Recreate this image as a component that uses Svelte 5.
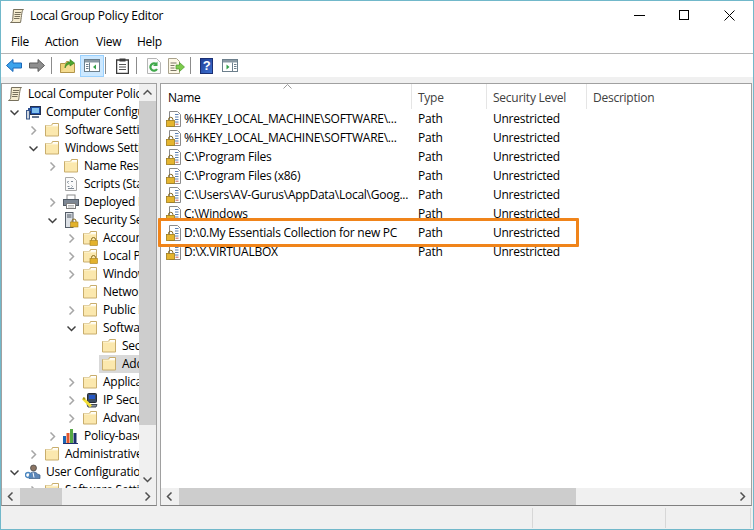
<script>
  const tree = [
    { l: 0, t: 'Local Computer Policy', i: 'scroll' },
    { l: 1, t: 'Computer Configuration', i: 'pc', c: 'o' },
    { l: 2, t: 'Software Settings', i: 'folder', c: 'c' },
    { l: 2, t: 'Windows Settings', i: 'folder', c: 'o' },
    { l: 3, t: 'Name Resolution Policy', i: 'folder', c: 'c' },
    { l: 3, t: 'Scripts (Startup/Shutdown)', i: 'script' },
    { l: 3, t: 'Deployed Printers', i: 'printer', c: 'c' },
    { l: 3, t: 'Security Settings', i: 'server', c: 'o' },
    { l: 4, t: 'Account Policies', i: 'lockfolder', c: 'c' },
    { l: 4, t: 'Local Policies', i: 'lockfolder', c: 'c' },
    { l: 4, t: 'Windows Firewall', i: 'folder', c: 'c' },
    { l: 4, t: 'Network List Manager', i: 'folder' },
    { l: 4, t: 'Public Key Policies', i: 'folder', c: 'c' },
    { l: 4, t: 'Software Restriction', i: 'folder', c: 'o' },
    { l: 5, t: 'Security Levels', i: 'folder' },
    { l: 5, t: 'Additional Rules', i: 'folder', sel: true },
    { l: 4, t: 'Application Control', i: 'folder', c: 'c' },
    { l: 4, t: 'IP Security Policies', i: 'ipsec', c: 'c' },
    { l: 4, t: 'Advanced Audit', i: 'folder', c: 'c' },
    { l: 3, t: 'Policy-based QoS', i: 'bars', c: 'c' },
    { l: 2, t: 'Administrative Templates', i: 'folder', c: 'c' },
    { l: 1, t: 'User Configuration', i: 'user', c: 'o' },
    { l: 2, t: 'Software Settings', i: 'folder', c: 'c' }
  ];
  const rows = [
    { n: '%HKEY_LOCAL_MACHINE\\SOFTWARE\\...' },
    { n: '%HKEY_LOCAL_MACHINE\\SOFTWARE\\...' },
    { n: 'C:\\Program Files' },
    { n: 'C:\\Program Files (x86)' },
    { n: 'C:\\Users\\AV-Gurus\\AppData\\Local\\Goog...' },
    { n: 'C:\\Windows' },
    { n: 'D:\\0.My Essentials Collection for new PC', hi: true },
    { n: 'D:\\X.VIRTUALBOX' }
  ];
</script>

{#snippet lock(x, y)}
  <path d="M{x + 1.5} {y + 3}v-1a2 2 0 0 1 4 0v1" fill="none" stroke="#8a6d1e" stroke-width="1" />
  <rect x={x} y={y + 3} width="7.5" height="5" fill="#e3b22c" stroke="#a57f1a" stroke-width=".6" />
{/snippet}

{#snippet folderShape()}
  <path d="M1.500 3.500h6l1-2h6v12.500h-13z" fill="#fbe8ae" stroke="#c8ad6c" />
  <path d="M9 2h5v2H8.500z" fill="#fff" />
  <path d="M2 4h12" stroke="#fff7dc" />
{/snippet}

{#snippet icon(name)}
  <svg class="ico" viewBox="0 0 16 16" width="16" height="16" aria-hidden="true">
    {#if name === 'folder'}
      {@render folderShape()}
    {:else if name === 'lockfolder'}
      {@render folderShape()}
      {@render lock(8, 7.5)}
    {:else if name === 'scroll'}
      <path d="M4.500 1.500h10c-1.500 1-1.500 3-2 6s-.5 5-1 7H1.500c1.500-1 2-1 2.200-3z" fill="#f5ecd0" stroke="#77705c" />
      <path d="M6 4.500h6M5.500 6.500h6M5.500 8.500h5.500M5 10.500h5.500" stroke="#77705c" />
    {:else if name === 'pc'}
      <rect x="5.500" y="2.500" width="10" height="8" fill="#1d4fa8" stroke="#23314f" />
      <rect x="7" y="4" width="7" height="5" fill="#7fc0ee" />
      <rect x="1.500" y="6.500" width="3" height="8.500" fill="#cfd6df" stroke="#3d5a8a" />
      <path d="M7 13h7" stroke="#66758f" stroke-width="2" />
      <rect x="3" y="4" width="3" height="3" fill="#2c4f92" />
    {:else if name === 'script'}
      <path d="M2.500 1.500h8l3 3v10h-11z" fill="#fafafa" stroke="#a8a8a8" />
      <path d="M4.500 5.500h1l-1 1 1 1M8 5.500h2M4.500 10.500h2M8.500 9.500l1 1-1 1M5 12.500h6" stroke="#7f8a96" fill="none" />
    {:else if name === 'printer'}
      <rect x="4" y="1" width="8" height="5" fill="#fff" stroke="#8b8b8b" />
      <rect x=".5" y="5.500" width="15" height="6" fill="#7d8794" stroke="#525b66" />
      <rect x="3.500" y="9.500" width="9" height="5" fill="#fff" stroke="#7d7d7d" />
      <path d="M5 11.500h6M5 13h6" stroke="#b7b7b7" />
    {:else if name === 'server'}
      <rect x="2.500" y=".5" width="7.500" height="15" fill="#dde1e6" stroke="#555d68" />
      <path d="M4 3h4.500M4 5h4.500" stroke="#4b5561" />
      {@render lock(7.500, 7)}
    {:else if name === 'ipsec'}
      <rect x="5.500" y="1.500" width="9" height="9" rx="1" fill="#3c4a5e" stroke="#242b36" />
      <rect x="7" y="3" width="6" height="4" fill="#2457c5" />
      <path d="M5 12.500h10l-1 2.500H6z" fill="#8d96a3" stroke="#424a55" />
      <path d="M1 6.500l8 8" stroke="#f3df38" stroke-width="3" />
      <path d="M1.500 5l-1 2 2 1 1-2z" fill="#a8941a" />
    {:else if name === 'bars'}
      <rect x="0" y="8" width="3" height="7" fill="#1a67b5" />
      <rect x="3.500" y="5" width="3" height="10" fill="#e2572d" />
      <rect x="7" y="1" width="3" height="14" fill="#55a944" />
      <rect x="10.500" y="5" width="3" height="10" fill="#1e2f6d" />
      <path d="M0 15.500h15" stroke="#1e2f6d" />
    {:else if name === 'user'}
      <circle cx="8.500" cy="4" r="3" fill="#8c7564" stroke="#3f3f3f" stroke-width=".7" />
      <path d="M4 14.500c0-5 2-6.500 4.500-6.500s3.500 1.500 4 2l2.500 1v3.500z" fill="#5d87b8" stroke="#3a5a83" stroke-width=".7" />
      <circle cx="3" cy="11" r="2.500" fill="none" stroke="#4b87c0" stroke-width="1.400" />
      <path d="M8 8.500l1 5" stroke="#fff" />
    {/if}
  </svg>
{/snippet}

{#snippet doclock()}
  <svg class="ico" viewBox="0 0 16 16" width="16" height="16" aria-hidden="true">
    <path d="M3.500 .5h8l3 3v12h-11z" fill="#fff" stroke="#8a8a8a" />
    <path d="M9 3.500h3.500M9 6h3.500M9 8.500h3.500M9 11h3.500" stroke="#5a7fb0" />
    <path d="M9.500 13.200h3" stroke="#c65b52" />
    <path d="M2.500 9.500v-1a2.200 2.200 0 0 1 4.400 0v1" fill="none" stroke="#80651d" />
    <rect x=".5" y="9.500" width="8" height="6" fill="#e5b52f" stroke="#9c7a1c" stroke-width=".8" />
  </svg>
{/snippet}

{#snippet chev(dir, w = '#6c6c6c')}
  <svg class="chev" viewBox="0 0 9 9" width="9" height="9" aria-hidden="true">
    {#if dir === 'r'}<path d="M2.500 .5l4 4-4 4" fill="none" stroke={w} stroke-width="1.500" />
    {:else if dir === 'l'}<path d="M6.500 .5l-4 4 4 4" fill="none" stroke={w} stroke-width="1.500" />
    {:else if dir === 'u'}<path d="M.5 6.500l4-4 4 4" fill="none" stroke={w} stroke-width="1.500" />
    {:else}<path d="M.5 2.500l4 4 4-4" fill="none" stroke={w} stroke-width="1.500" />{/if}
  </svg>
{/snippet}

<div class="window">
  <header class="title">
    <svg class="appicon" viewBox="0 0 16 16" width="16" height="16" aria-hidden="true">
      <path d="M4.500 1.500h10c-1.500 1-1.500 3-2 6s-.5 5-1 7H1.500c1.500-1 2-1 2.200-3z" fill="#f5ecd0" stroke="#77705c" />
      <path d="M6 4.500h6M5.500 6.500h6M5.500 8.500h5.500M5 10.500h5.500" stroke="#77705c" />
    </svg>
    <span class="title-text">Local Group Policy Editor</span>
    <div class="win-btns">
      <svg viewBox="0 0 11 11" width="11" height="11" aria-hidden="true"><path d="M0 5.500h11" stroke="#000" /></svg>
      <svg viewBox="0 0 11 11" width="11" height="11" aria-hidden="true"><rect x=".5" y=".5" width="9" height="9" fill="none" stroke="#000" /></svg>
      <svg viewBox="0 0 11 11" width="11" height="11" aria-hidden="true"><path d="M.5.5l10 10M10.500.5l-10 10" stroke="#000" /></svg>
    </div>
  </header>

  <nav class="menu"><span>File</span><span>Action</span><span>View</span><span>Help</span></nav>

  <div class="toolbar">
    <svg class="tb w16" viewBox="0 0 16 13" width="16" height="13" aria-hidden="true"><path d="M.5 6.500l6.500-6v3.500h8.500v5H7v3.500z" fill="#3ba3ec" stroke="#1b67b8" /></svg>
    <svg class="tb w16 fw" viewBox="0 0 16 13" width="16" height="13" aria-hidden="true"><path d="M15.500 6.500l-6.500-6v3.500H.5v5H9v3.500z" fill="#8f8f8f" stroke="#5c5c5c" /></svg>
    <i class="sep s1"></i>
    <svg class="tb up" viewBox="0 0 16 16" width="16" height="16" aria-hidden="true"><path d="M.5 5.500h5l1-2h2v11h-8z" fill="#f0d27a" stroke="#b2954a" /><path d="M.5 14.500h14v-9h-6" fill="#f5dc90" stroke="#b2954a" /><path d="M5 10c0-4 2-6 5-6V1.500L14.500 5 10 8V6c-2 0-3.500 1-5 4z" fill="#4ea72e" stroke="#2f7d1c" stroke-width=".6" /></svg>
    <div class="tb-active">
      <svg viewBox="0 0 16 13" width="16" height="13" aria-hidden="true"><rect x=".5" y=".5" width="15" height="12" fill="#fff" stroke="#6c7f8c" /><rect x="1" y="1" width="14" height="2.500" fill="#8a99a3" /><path d="M5.500 3.500v9" stroke="#6c7f8c" /><path d="M2 5.500h2.500M2 7.500h2.500M2 9.500h2.500" stroke="#6c7f8c" /><path d="M12 5.500l-3 2.500 3 2.500z" fill="#35a04a" /></svg>
    </div>
    <i class="sep s2"></i>
    <svg class="tb clip" viewBox="0 0 13 16" width="13" height="16" aria-hidden="true"><rect x=".5" y="2" width="12" height="13.500" fill="#fff" stroke="#3a3a3a" stroke-width="1.500" /><rect x="3.500" y=".5" width="6" height="3" fill="#3a3a3a" /><path d="M3 6.500h7M3 9h7M3 11.500h7" stroke="#555" /></svg>
    <i class="sep s3"></i>
    <svg class="tb refresh" viewBox="0 0 14 16" width="14" height="16" aria-hidden="true"><path d="M.5.5h9l4 4v11H.5z" fill="#fbfbfb" stroke="#b5b5b5" /><path d="M10 11a3.600 3.600 0 1 1-.5-4.500" fill="none" stroke="#3fa84a" stroke-width="2.200" /><path d="M10.500 3.500v4.500H6z" fill="#3fa84a" /></svg>
    <svg class="tb export" viewBox="0 0 17 16" width="17" height="16" aria-hidden="true"><path d="M.5.5h8l3 3v12H.5z" fill="#fdf8e6" stroke="#a9a28c" /><path d="M2.500 5h6M2.500 7.500h4M2.500 10h4M2.500 12.500h6" stroke="#7c7766" /><path d="M8 7h3.500V4.500L16.500 9l-5 4.500V11H8z" fill="#7ccb4c" stroke="#4c9a2c" stroke-width=".7" /></svg>
    <i class="sep s4"></i>
    <div class="help">?</div>
    <svg class="tb view" viewBox="0 0 16 13" width="16" height="13" aria-hidden="true"><rect x=".5" y=".5" width="15" height="12" fill="#fff" stroke="#6c7f8c" /><rect x="1" y="1" width="14" height="2.500" fill="#8a99a3" /><path d="M10.500 3.500v9" stroke="#6c7f8c" /><path d="M12 5.500h2.500M12 7.500h2.500M12 9.500h2.500" stroke="#6c7f8c" /><path d="M4.500 5.500l3 2.500-3 2.500z" fill="#35a04a" /></svg>
  </div>

  <main class="panes">
    <section class="pane left">
      <div class="tree">
        {#each tree as n}
          <div class="node l{n.l}">
            <span class="tw">{#if n.c === 'c'}{@render chev('r', '#a6a6a6')}{:else if n.c === 'o'}{@render chev('d', '#404040')}{/if}</span>
            <span class="item" class:sel={n.sel}>
              {@render icon(n.i)}
              <span class="label">{n.t}</span>
            </span>
          </div>
        {/each}
      </div>
      <div class="vbar">
        <span class="btn">{@render chev('u', '#505050')}</span>
        <span class="vthumb"></span>
        <span class="fill"></span>
        <span class="btn">{@render chev('d', '#505050')}</span>
      </div>
      <div class="hbar lh">
        <span class="btn">{@render chev('l', '#505050')}</span>
        <span class="hthumb t1"></span>
        <span class="fill"></span>
        <span class="btn">{@render chev('r', '#505050')}</span>
      </div>
    </section>

    <section class="pane right">
      <div class="list">
        <div class="cols head">
          <span class="c1">Name<svg class="sort" viewBox="0 0 9 5" width="9" height="5" aria-hidden="true"><path d="M.5 4.500l4-4 4 4" fill="none" stroke="#9a9a9a" /></svg></span>
          <span class="c2">Type</span><span class="c3">Security Level</span><span class="c4">Description</span>
        </div>
        {#each rows as r}
          <div class="cols row" class:hi={r.hi}>
            <span class="c1">{@render doclock()}<span class="nm">{r.n}</span></span>
            <span class="c2">Path</span><span class="c3">Unrestricted</span>
          </div>
        {/each}
      </div>
      <div class="hbar rh">
        <span class="btn">{@render chev('l', '#505050')}</span>
        <span class="hthumb t2"></span>
        <span class="fill"></span>
        <span class="btn">{@render chev('r', '#505050')}</span>
      </div>
    </section>
  </main>

  <footer class="status"><span class="s-a"></span><span class="s-b"></span><span class="s-c"></span></footer>
</div>

<style>
  :global(body) { margin: 0; }
  .window {
    width: 754px; height: 530px; box-sizing: border-box;
    border: 1px solid #71b8ca;
    display: flex; flex-direction: column;
    background: #fff; overflow: hidden;
    font: 12px/18px "Open Sans", "Noto Sans", sans-serif;
    letter-spacing: -.25px; color: #000;
  }
  .title { height: 29px; display: flex; align-items: center; padding-left: 8px; }
  .appicon { margin-right: 5px; flex: none; }
  .title-text { flex: 1; }
  .win-btns { display: flex; gap: 34px; padding-right: 18px; }
  .menu {
    height: 24px; box-sizing: border-box; border-bottom: 1px solid #b5b5b5;
    display: flex; padding: 0 0 0 10px; align-items: center;
  }
  .menu span:nth-child(1) { width: 34px; }
  .menu span:nth-child(2) { width: 51px; }
  .menu span:nth-child(3) { width: 41px; }
  .toolbar { height: 23px; display: flex; align-items: center; padding-left: 5px; }
  .tb { flex: none; }
  .fw { margin-left: 7px; }
  .sep { width: 1px; height: 17px; background: #8c8c8c; flex: none; }
  .s1 { margin-left: 6px; }
  .up { margin-left: 8px; }
  .tb-active {
    width: 22px; height: 20px; margin-left: 4px; display: flex; align-items: center; justify-content: center;
    background: #cce8ff; border: 1px solid #99d1ff; flex: none;
  }
  .s2 { margin-left: 1px; }
  .clip { margin-left: 10px; }
  .s3 { margin-left: 7px; }
  .refresh { margin-left: 10px; }
  .export { margin-left: 7px; }
  .s4 { margin-left: 5px; }
  .help {
    width: 13px; height: 16px; margin-left: 9px; flex: none;
    background: linear-gradient(135deg, #1f3f96, #3c6fd0); border: 1px solid #1b2f73; box-sizing: border-box;
    color: #fff; font: bold 13px/14px "Liberation Sans", sans-serif; text-align: center;
  }
  .view { margin-left: 9px; }

  .panes { flex: 1; min-height: 0; display: flex; gap: 3px; background: #f0f0f0; padding-top: 6px; }
  .pane { background: #fff; border: 1px solid #a0a0a0; border-bottom-color: #808080; box-sizing: border-box; flex: none; }
  .left { width: 156px; display: grid; grid-template-columns: 1fr 17px; grid-template-rows: 1fr 17px; }
  .tree { overflow: hidden; min-width: 0; min-height: 0; padding-top: 1px; }
  .node { height: 18px; display: flex; align-items: center; white-space: nowrap; }
  .l0 { padding-left: 5px; }
  .l0 .tw { display: none; }
  .l1 { padding-left: 7px; }
  .l2 { padding-left: 26px; }
  .l3 { padding-left: 45px; }
  .l4 { padding-left: 64px; }
  .l5 { padding-left: 83px; }
  .tw { width: 16px; height: 18px; display: flex; align-items: center; flex: none; padding-left: 1px; box-sizing: border-box; }
  .chev { display: block; }
  .ico { flex: none; }
  .item { display: flex; align-items: center; height: 18px; flex: 1; min-width: 0; }
  .item.sel { background: #d9d9d9; margin-left: -2px; padding-left: 2px; }
  .label { margin-left: 5px; }
  .vbar { background: #f0f0f0; display: flex; flex-direction: column; }
  .hbar { background: #f0f0f0; display: flex; align-items: center; }
  .lh { grid-column: 1 / 3; }
  .btn { width: 17px; height: 17px; display: flex; align-items: center; justify-content: center; flex: none; }
  .vthumb { height: 324px; background: #cdcdcd; flex: none; }
  .fill { flex: 1; }
  .hthumb { height: 17px; background: #cdcdcd; flex: none; }
  .t1 { width: 42px; margin-left: 1px; }
  .right { flex: 1; margin-right: 1px; display: flex; flex-direction: column; min-width: 0; }
  .list { flex: 1; min-height: 0; }
  .cols { display: flex; white-space: nowrap; }
  .c1 { width: 250px; flex: none; box-sizing: border-box; position: relative; }
  .c2 { width: 75px; flex: none; box-sizing: border-box; padding-left: 7px; }
  .c3 { width: 100px; flex: none; box-sizing: border-box; padding-left: 7px; }
  .c4 { padding-left: 6px; }
  .head { height: 25px; color: #404040; }
  .head span { line-height: 28px; }
  .head .c1 { padding-left: 7px; color: #000; height: 25px; }
  .head .c2, .head .c3, .head .c4 { border-left: 1px solid #e5e5e5; padding-left: 6px; height: 25px; }
  .sort { position: absolute; left: 122px; top: 0; }
  .row { height: 19px; align-items: center; position: relative; }
  .row .c1 { display: flex; align-items: center; padding-left: 5px; }
  .nm { margin-left: 2px; }
  .hi { z-index: 1; }
  .hi::before {
    content: ""; position: absolute; z-index: -1;
    left: -3px; top: -5px; width: 421px; height: 29px;
    background: #fff; border: 3px solid #f0841a; border-radius: 1px; box-sizing: border-box;
  }
  .rh { height: 17px; }
  .t2 { width: 397px; margin-left: 1px; }
  .status { height: 23px; background: #f0f0f0; display: flex; }
  .status span { display: block; height: 20px; margin-top: 2px; border-right: 1px solid #d7d7d7; box-sizing: border-box; }
  .s-a { width: 532px; }
  .s-b { width: 133px; }
  .s-c { width: 85px; }
</style>
